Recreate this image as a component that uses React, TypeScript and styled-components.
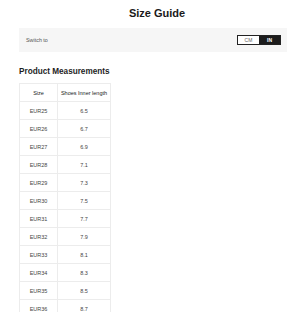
import React from 'react';
import styled, { createGlobalStyle } from 'styled-components';

const GlobalStyle = createGlobalStyle`
  html, body {
    margin: 0;
    padding: 0;
    background: #fff;
    overflow: hidden;
  }
  body {
    font-family: 'Liberation Sans', Arial, sans-serif;
    color: #222;
  }
`;

const sizes = [
  ['EUR25', '6.5'],
  ['EUR26', '6.7'],
  ['EUR27', '6.9'],
  ['EUR28', '7.1'],
  ['EUR29', '7.3'],
  ['EUR30', '7.5'],
  ['EUR31', '7.7'],
  ['EUR32', '7.9'],
  ['EUR33', '8.1'],
  ['EUR34', '8.3'],
  ['EUR35', '8.5'],
  ['EUR36', '8.7'],
];

const Page = styled.div`
  width: 300px;
  height: 312px;
  padding: 5px 13px 0 19px;
  box-sizing: border-box;
  overflow: hidden;
`;

const Title = styled.h1`
  margin: 0;
  text-align: center;
  font-size: 11px;
  font-weight: 700;
  line-height: 16px;
  color: #1a1a1a;
  padding-left: 8px;
`;

const SwitchBar = styled.div`
  margin-top: 7px;
  height: 24px;
  background: #f6f6f6;
  display: flex;
  align-items: center;
  justify-content: space-between;
  padding: 0 6px 0 7px;
`;

const SwitchLabel = styled.span`
  font-size: 5.4px;
  color: #555;
`;

const Toggle = styled.div`
  display: flex;
  border: 1px solid #222;
  height: 8px;
`;

const ToggleOption = styled.span<{ $active?: boolean }>`
  width: 21px;
  display: flex;
  align-items: center;
  justify-content: center;
  font-size: 5px;
  font-weight: ${(p) => (p.$active ? 700 : 400)};
  background: ${(p) => (p.$active ? '#1c1c1c' : '#fff')};
  color: ${(p) => (p.$active ? '#fff' : '#666')};
`;

const SectionTitle = styled.h2`
  margin: 14px 0 0;
  font-size: 8.2px;
  font-weight: 700;
  line-height: 12px;
  color: #1e1e1e;
`;

const Table = styled.table`
  margin-top: 5px;
  border-collapse: collapse;
  table-layout: fixed;
  width: 91px;
`;

const HeadCell = styled.th`
  height: 17px;
  padding: 0;
  font-size: 5.5px;
  font-weight: 400;
  color: #222;
  border: 1px solid #ececec;
  text-align: center;
  white-space: nowrap;
`;

const Cell = styled.td`
  height: 17px;
  padding: 0;
  font-size: 5.5px;
  color: #444;
  border: 1px solid #ececec;
  text-align: center;
`;

export default function App(): JSX.Element {
  return (
    <>
      <GlobalStyle />
      <Page>
        <Title>Size Guide</Title>
        <SwitchBar>
          <SwitchLabel>Switch to</SwitchLabel>
          <Toggle>
            <ToggleOption>CM</ToggleOption>
            <ToggleOption $active>IN</ToggleOption>
          </Toggle>
        </SwitchBar>
        <SectionTitle>Product Measurements</SectionTitle>
        <Table>
          <colgroup>
            <col style={{ width: 38 }} />
            <col style={{ width: 53 }} />
          </colgroup>
          <thead>
            <tr>
              <HeadCell>Size</HeadCell>
              <HeadCell>Shoes Inner length</HeadCell>
            </tr>
          </thead>
          <tbody>
            {sizes.map(([size, len]) => (
              <tr key={size}>
                <Cell>{size}</Cell>
                <Cell>{len}</Cell>
              </tr>
            ))}
          </tbody>
        </Table>
      </Page>
    </>
  );
}
